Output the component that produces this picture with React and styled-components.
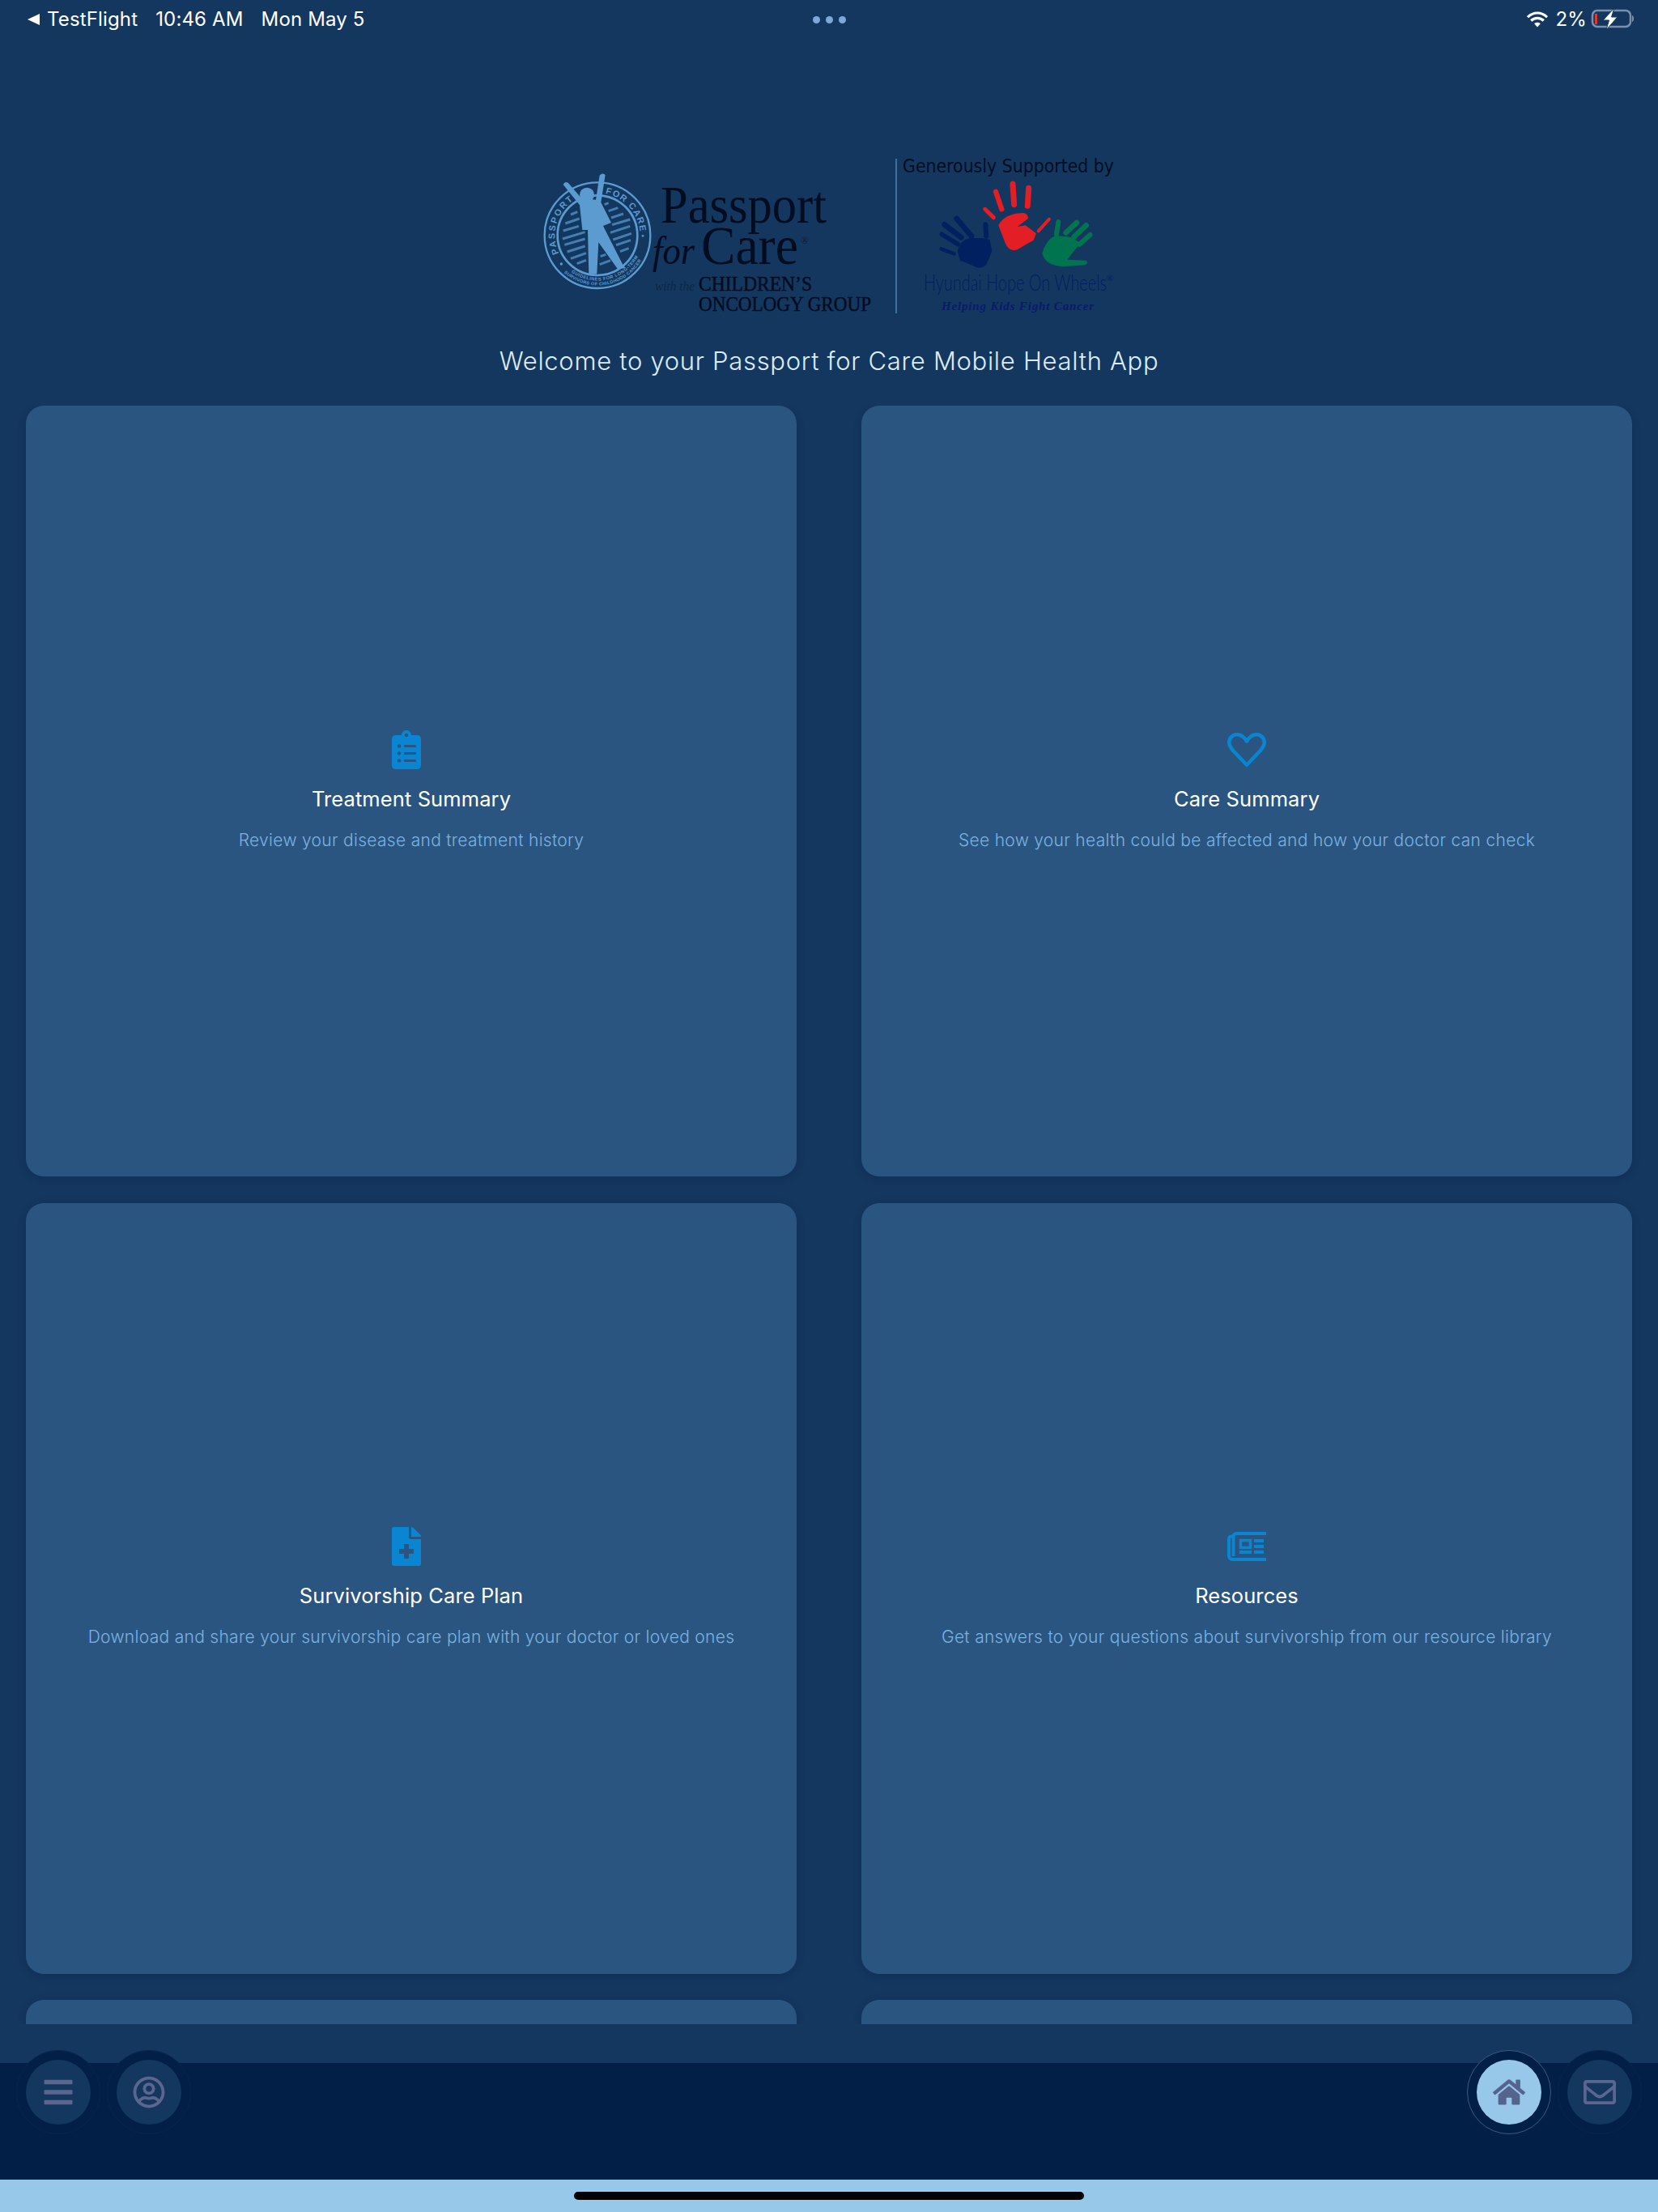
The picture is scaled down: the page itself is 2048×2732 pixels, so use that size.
import React from 'react';
import styled, { createGlobalStyle } from 'styled-components';
import {
  FaBars,
  FaClipboardList,
  FaFileMedical,
  FaHome,
  FaRegEnvelope,
  FaRegUserCircle,
} from 'react-icons/fa';

const GlobalStyle = createGlobalStyle`
  html, body {
    margin: 0;
    padding: 0;
    background: #14375f;
  }
`

const Page = styled.div`
  width: 2048px;
  height: 2732px;
  display: flex;
  flex-direction: column;
  overflow: hidden;
  background: #14375f;
  font-family: Inter, "Liberation Sans", sans-serif;
`

const StatusBar = styled.div`
  height: 48px;
  padding: 0 30px 0 34px;
  display: grid;
  grid-template-columns: 1fr auto 1fr;
  align-items: center;
  color: #fff;
  font-size: 24px;
  line-height: 48px;
  letter-spacing: 0.15px;
`

const StatusLeft = styled.div`
  display: flex;
  align-items: center;
`

const BackArrow = styled.span`
  width: 0;
  height: 0;
  margin-right: 9px;
  border-style: solid;
  border-width: 7px 15px 7px 0;
  border-color: transparent #fff transparent transparent;
`

const StatusItem = styled.span`
  margin-right: 22px;
`

const Dots = styled.div`
  display: flex;
  gap: 7px;
  margin-left: -3px;
`

const Dot = styled.span`
  width: 9px;
  height: 9px;
  border-radius: 50%;
  background: #7fa8d8;
`

const StatusRight = styled.div`
  display: flex;
  align-items: center;
  justify-content: flex-end;
  gap: 9px;
`

const Percent = styled.span`
  margin-right: -5px;
`

const LogoRow = styled.div`
  padding-top: 142px;
  display: flex;
  justify-content: center;
`

const Welcome = styled.h1`
  margin: 24px 0 33px;
  text-align: center;
  color: #dcecfa;
  font-size: 31px;
  font-weight: 300;
  line-height: 44px;
  letter-spacing: 0.7px;
`

const Scroller = styled.div`
  flex: 1;
  min-height: 0;
  overflow: hidden;
  padding: 0 32px;
  margin-bottom: 48px;
`

const CardGrid = styled.div`
  display: grid;
  grid-template-columns: 952px 952px;
  column-gap: 80px;
  row-gap: 32.5px;
`

const Card = styled.div`
  height: 952px;
  box-sizing: border-box;
  padding-top: 5px;
  border-radius: 22px;
  background: #2a5580;
  box-shadow: 0 2px 10px rgba(5, 25, 60, 0.25);
  display: flex;
  flex-direction: column;
  align-items: center;
  justify-content: center;
`

const IconBox = styled.div`
  width: 48px;
  height: 48px;
  display: flex;
  align-items: center;
  justify-content: flex-start;
  color: #0a85d1;
`

const CardTitle = styled.div`
  margin-top: 17px;
  color: #fff;
  font-size: 25.5px;
  line-height: 40px;
  letter-spacing: 0.1px;
`

const CardText = styled.div`
  margin-top: 11px;
  color: #7cb2e0;
  font-size: 21px;
  font-weight: 300;
  line-height: 40px;
  letter-spacing: 0.3px;
`

const BottomBar = styled.div`
  height: 144px;
  background: #021f47;
  flex-shrink: 0;
`

const BarRow = styled.div`
  margin-top: -16px;
  padding: 0 20px;
  display: flex;
  justify-content: space-between;
`

const BarGroup = styled.div`
  display: flex;
  gap: 8px;
`

const NavRing = styled.div`
  width: 104px;
  height: 104px;
  box-sizing: border-box;
  border-radius: 50%;
  background: #021f47;
  border: 1px solid ${(p) => (p.$active ? '#3d5a80' : '#082549')};
  display: flex;
  align-items: center;
  justify-content: center;
`

const NavButton = styled.div`
  width: 80px;
  height: 80px;
  border-radius: 50%;
  background: ${(p) => (p.$active ? '#97c8ea' : '#14375f')};
  color: ${(p) => (p.$active ? '#55648c' : '#5a6690')};
  display: flex;
  align-items: center;
  justify-content: center;
`

const HomeStrip = styled.div`
  height: 40px;
  background: #97c8ea;
  flex-shrink: 0;
  display: flex;
  align-items: center;
  justify-content: center;
`

const HomeIndicator = styled.div`
  width: 630px;
  height: 10px;
  border-radius: 5px;
  background: #000;
`

const Heart = () => (
  <svg width="48" height="48" viewBox="0 0 48 48" fill="none" stroke="currentColor" strokeWidth="4.5" strokeLinejoin="round">
    <path d="M24 13.500C21 8.500 17 5.250 12 5.250 6.500 5.250 2.250 9.500 2.250 15c0 4 2.250 7 5.250 10.500L24 42.750 40.500 25.500c3-3.500 5.250-6.500 5.250-10.500 0-5.500-4.250-9.750-9.750-9.750-5 0-9 3.250-12 8.250z" />
  </svg>
)

// the glyph in the app is cut off on its right side, so no stock newspaper fits
const Newspaper = () => (
  <svg width="48" height="36" viewBox="0 0 48 36" fill="currentColor">
    <path d="M48 2H12Q7.500 2 7.500 6V30" fill="none" stroke="currentColor" strokeWidth="4" />
    <path d="M8 5.500H5.500Q2 5.500 2 9V29Q2 34 7 34H48" fill="none" stroke="currentColor" strokeWidth="4" />
    <rect x="16.500" y="10.500" width="12" height="9" fill="none" stroke="currentColor" strokeWidth="3.500" />
    <rect x="33" y="9" width="12" height="4" />
    <rect x="33" y="16" width="12" height="4" />
    <rect x="33" y="23" width="12" height="4" />
    <rect x="15" y="23" width="15" height="4" />
  </svg>
)

const WifiIcon = () => (
  <svg width="26" height="20" viewBox="0 0 26 20">
    <path d="M1 7.200C4.200 4 8.400 2 13 2s8.800 2 12 5.200" fill="none" stroke="#fff" strokeWidth="3.200" />
    <path d="M5.200 11.500C7.300 9.500 10 8.300 13 8.300s5.700 1.200 7.800 3.200" fill="none" stroke="#fff" strokeWidth="3.200" />
    <path d="M9.200 15.200c1-1 2.300-1.500 3.800-1.500s2.800.5 3.800 1.500L13 19.500z" fill="#fff" />
  </svg>
)

const BatteryIcon = () => (
  <svg width="54" height="28" viewBox="0 0 54 28">
    <rect x="3" y="3" width="47" height="20" rx="6" fill="none" stroke="#7b90ac" strokeWidth="2.500" />
    <path d="M52 9c1.500.5 2 2 2 4s-.5 3.500-2 4z" fill="#7b90ac" />
    <rect x="6" y="7" width="3" height="13" fill="#e8352c" />
    <path d="M30 0L16 15h7.500L20 27l14-16h-7.500z" fill="#fff" stroke="#14375f" strokeWidth="1" />
  </svg>
)

// seal and wordmark, coordinates taken straight off the page
const stripes = [
  [165, 195, 190, 185], [145, 228, 197, 210], [137, 255, 195, 238], [135, 285, 218, 260],
  [142, 307, 218, 285], [152, 333, 218, 312], [165, 358, 222, 338], [188, 377, 222, 364],
  [290, 158, 305, 152], [305, 182, 340, 170], [315, 207, 360, 192], [318, 233, 385, 213],
  [312, 262, 385, 238], [322, 288, 390, 265], [333, 308, 387, 290], [348, 332, 380, 320],
  [275, 350, 295, 343], [272, 380, 312, 365],
];

const Seal = () => (
  <g transform="translate(650 200) scale(0.3333)">
    <defs>
      <path id="sealLeft" d="M121 339A158 158 0 0 1 197 129" />
      <path id="sealRight" d="M293 117A158 158 0 0 1 422 266" />
      <path id="sealBottom1" d="M167 409A170 170 0 0 0 427 321" />
      <path id="sealBottom2" d="M140 410A187 187 0 0 0 435 348" />
    </defs>
    <circle cx="264" cy="272" r="196" fill="none" stroke="#5b9bd0" strokeWidth="7" />
    <circle cx="264" cy="272" r="148" fill="none" stroke="#5b9bd0" strokeWidth="8" />
    {stripes.map(([x1, y1, x2, y2]) => (
      <line key={`${x1}-${y1}`} x1={x1} y1={y1} x2={x2} y2={y2} stroke="#437fb2" strokeWidth="9" />
    ))}
    <text fontFamily="'Liberation Sans', sans-serif" fontWeight="700" fontSize="33" letterSpacing="6" fill="#5b9bd0">
      <textPath href="#sealLeft">PASSPORT</textPath>
    </text>
    <text fontFamily="'Liberation Sans', sans-serif" fontWeight="700" fontSize="33" letterSpacing="4.500" fill="#5b9bd0">
      <textPath href="#sealRight">FOR CARE</textPath>
    </text>
    <text fontFamily="'Liberation Sans', sans-serif" fontWeight="700" fontSize="17" letterSpacing="1.500" fill="#5b9bd0">
      <textPath href="#sealBottom1">GUIDELINES FOR LONG-TERM</textPath>
    </text>
    <text fontFamily="'Liberation Sans', sans-serif" fontWeight="700" fontSize="16.500" letterSpacing="1" fill="#5b9bd0">
      <textPath href="#sealBottom2">SURVIVORS OF CHILDHOOD CANCER</textPath>
    </text>
    <circle cx="130" cy="378" r="5" fill="#5b9bd0" />
    <circle cx="432" cy="274" r="4" fill="#5b9bd0" />
    <circle cx="225" cy="122" r="27" fill="#5b9bd0" />
    <path
      d="M137 84Q143 70 156 78L205 135L258 140L272 50Q283 38 293 48L277 150L315 225L285 237L360 385L368 392L340 398L268 298L262 415L232 418L228 252L208 252L198 160Z"
      fill="#5b9bd0"
    />
  </g>
)

const fingers = [
  ['#e31e25', 15, 350, 205, 382, 236], ['#e31e25', 19, 390, 140, 412, 205],
  ['#e31e25', 21, 453, 112, 458, 188], ['#e31e25', 21, 512, 127, 508, 193],
  ['#e31e25', 12, 588, 242, 548, 286],
  ['#00205f', 20, 245, 240, 300, 305], ['#00205f', 20, 200, 262, 262, 310],
  ['#00205f', 17, 190, 298, 250, 335], ['#00205f', 14, 188, 352, 235, 370],
  ['#00205f', 18, 352, 262, 355, 305],
  ['#00734f', 18, 622, 252, 615, 298], ['#00734f', 20, 690, 255, 650, 292],
  ['#00734f', 20, 725, 265, 680, 308], ['#00734f', 18, 740, 300, 700, 335],
];

const Hands = () => (
  <g transform="translate(1100 190) scale(0.3333)">
    <path d="M400 265Q420 225 480 220Q510 215 510 240L470 270L500 265L540 295L530 320L470 355Q440 365 425 330Z" fill="#e31e25" />
    <path d="M248 360Q260 315 300 312L340 312L368 318L376 360L355 412Q330 432 300 412L258 395Z" fill="#00205f" />
    <path d="M562 370Q575 320 610 303L665 308L705 330L680 360L655 392L725 395Q735 405 720 412L640 418Q575 415 562 370Z" fill="#00734f" />
    {fingers.map(([color, w, x1, y1, x2, y2]) => (
      <line key={`${x1}-${y1}`} x1={x1} y1={y1} x2={x2} y2={y2} stroke={color} strokeWidth={w} strokeLinecap="round" />
    ))}
  </g>
)

const Logo = () => (
  <svg width="730" height="210" viewBox="659 190 730 210">
    <Seal />
    <g fontFamily="'Liberation Serif', serif" fill="#000c20">
      <text x="816" y="275" fontSize="65" textLength="205" lengthAdjust="spacingAndGlyphs">Passport</text>
      <text x="806" y="326" fontSize="48" fontStyle="italic" textLength="52" lengthAdjust="spacingAndGlyphs">for</text>
      <text x="866" y="326" fontSize="68" textLength="120" lengthAdjust="spacingAndGlyphs">Care</text>
      <text x="989" y="301" fontSize="13" fill="#06203f">®</text>
      <text x="809" y="359" fontSize="17" fontStyle="italic" fill="#0b2748" textLength="49" lengthAdjust="spacingAndGlyphs">with the</text>
      <g stroke="#000c20" strokeWidth="0.4">
        <text x="863" y="359" fontSize="25" textLength="140" lengthAdjust="spacingAndGlyphs">CHILDREN’S</text>
        <text x="863" y="384" fontSize="25" textLength="213" lengthAdjust="spacingAndGlyphs">ONCOLOGY GROUP</text>
      </g>
    </g>
    <rect x="1106" y="196" width="2" height="191" fill="#3d6f9f" />
    <text x="1115" y="213" fontFamily="'DejaVu Sans', sans-serif" fontSize="23" fill="#000d22" textLength="261" lengthAdjust="spacingAndGlyphs">Generously Supported by</text>
    <Hands />
    <text x="1141" y="359" fontFamily="Lato, sans-serif" fontSize="27" fontWeight="300" fill="#00205f" textLength="226" lengthAdjust="spacingAndGlyphs">Hyundai Hope On Wheels</text>
    <text x="1367" y="347" fontFamily="Lato, sans-serif" fontSize="10" fill="#00205f">®</text>
    <text x="1163" y="383" fontFamily="'Liberation Serif', serif" fontSize="15" fontStyle="italic" fontWeight="700" fill="#0a1a6a" textLength="188">Helping Kids Fight Cancer</text>
  </svg>
)

const cards = [
  { title: 'Treatment Summary', text: 'Review your disease and treatment history', icon: <FaClipboardList size={48} preserveAspectRatio="xMinYMid meet" /> },
  { title: 'Care Summary', text: 'See how your health could be affected and how your doctor can check', icon: <Heart /> },
  { title: 'Survivorship Care Plan', text: 'Download and share your survivorship care plan with your doctor or loved ones', icon: <FaFileMedical size={48} preserveAspectRatio="xMinYMid meet" /> },
  { title: 'Resources', text: 'Get answers to your questions about survivorship from our resource library', icon: <Newspaper /> },
  { title: '', text: '', icon: null },
  { title: '', text: '', icon: null },
];

export default function App() {
  return (
    <Page>
      <GlobalStyle />
      <StatusBar>
        <StatusLeft>
          <BackArrow />
          <StatusItem>TestFlight</StatusItem>
          <StatusItem>10:46 AM</StatusItem>
          <StatusItem>Mon May 5</StatusItem>
        </StatusLeft>
        <Dots>
          <Dot />
          <Dot />
          <Dot />
        </Dots>
        <StatusRight>
          <WifiIcon />
          <Percent>2%</Percent>
          <BatteryIcon />
        </StatusRight>
      </StatusBar>
      <LogoRow>
        <Logo />
      </LogoRow>
      <Welcome>Welcome to your Passport for Care Mobile Health App</Welcome>
      <Scroller>
        <CardGrid>
          {cards.map((card, i) => (
            <Card key={i}>
              {card.icon && <IconBox>{card.icon}</IconBox>}
              {card.title && <CardTitle>{card.title}</CardTitle>}
              {card.text && <CardText>{card.text}</CardText>}
            </Card>
          ))}
        </CardGrid>
      </Scroller>
      <BottomBar>
        <BarRow>
          <BarGroup>
            <NavRing>
              <NavButton><FaBars size={40} /></NavButton>
            </NavRing>
            <NavRing>
              <NavButton><FaRegUserCircle size={40} /></NavButton>
            </NavRing>
          </BarGroup>
          <BarGroup>
            <NavRing $active>
              <NavButton $active><FaHome size={40} /></NavButton>
            </NavRing>
            <NavRing>
              <NavButton><FaRegEnvelope size={40} /></NavButton>
            </NavRing>
          </BarGroup>
        </BarRow>
      </BottomBar>
      <HomeStrip>
        <HomeIndicator />
      </HomeStrip>
    </Page>
  )
}
